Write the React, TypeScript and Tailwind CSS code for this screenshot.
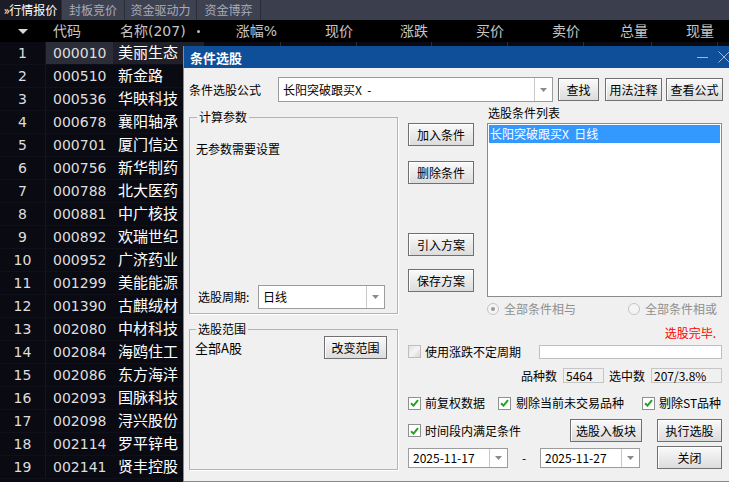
import React from "react";

const rows: [string, string][] = [
  ["000010", "美丽生态"],
  ["000510", "新金路"],
  ["000536", "华映科技"],
  ["000678", "襄阳轴承"],
  ["000701", "厦门信达"],
  ["000756", "新华制药"],
  ["000788", "北大医药"],
  ["000881", "中广核技"],
  ["000892", "欢瑞世纪"],
  ["000952", "广济药业"],
  ["001299", "美能能源"],
  ["001390", "古麒绒材"],
  ["002080", "中材科技"],
  ["002084", "海鸥住工"],
  ["002086", "东方海洋"],
  ["002093", "国脉科技"],
  ["002098", "浔兴股份"],
  ["002114", "罗平锌电"],
  ["002141", "贤丰控股"],
];

const numCols = [
  { label: "涨幅%", w: "w-[77px]" },
  { label: "现价", w: "w-[76px]" },
  { label: "涨跌", w: "w-[75px]" },
  { label: "买价", w: "w-[76px]" },
  { label: "卖价", w: "w-[76px]" },
  { label: "总量", w: "w-[68px]" },
  { label: "现量", w: "w-[66px]" },
];

const tabs = [
  { label: "»行情报价", w: "w-[62px]", active: true },
  { label: "封板竞价", w: "w-[63px]" },
  { label: "资金驱动力", w: "w-[72px]" },
  { label: "资金博弈", w: "w-[64px]" },
];

const Btn = ({ children, className = "" }: { children: React.ReactNode; className?: string }) => (
  <div
    className={`flex items-center justify-center border border-[#707070] bg-linear-to-b from-[#fafafa] to-[#dcdcdc] text-[12px] leading-none text-black shadow-[inset_1px_1px_0_#ffffff] ${className}`}
  >
    {children}
  </div>
);

const Combo = ({ value, className = "" }: { value: string; className?: string }) => (
  <div className={`flex border border-[#9c9c9c] bg-white ${className}`}>
    <div className="flex flex-1 items-center whitespace-pre pl-[4px] text-[12px] leading-none text-black">{value}</div>
    <div className="flex w-[18px] items-center justify-center border-l border-[#c8c8c8]">
      <svg width="7" height="4" viewBox="0 0 7 4">
        <path d="M0 0h7L3.5 4z" fill="#8a8a8a" />
      </svg>
    </div>
  </div>
);

const Check = ({ checked = true, disabled = false }: { checked?: boolean; disabled?: boolean }) => (
  <span
    className={`flex h-[13px] w-[13px] shrink-0 items-center justify-center border ${
      disabled ? "border-[#bdbdbd] bg-linear-to-br from-[#e2e2e2] via-[#f4f4f4] to-[#d6d6d6]" : "border-[#8f8f8f] bg-white"
    }`}
  >
    {checked && (
      <svg width="9" height="8" viewBox="0 0 9 8">
        <path d="M1 4.2 L3.5 6.6 L8 1.2" stroke="#1ea51e" strokeWidth="2" fill="none" />
      </svg>
    )}
  </span>
);

const Radio = ({ on }: { on?: boolean }) => (
  <span className="flex h-[12px] w-[12px] items-center justify-center rounded-full border border-[#c4c4c4] bg-[#f4f4f4]">
    {on && <span className="h-[4px] w-[4px] rounded-full bg-[#9a9a9a]" />}
  </span>
);

const Dialog = () => (
  <div className="absolute left-[183px] top-[46px] flex h-[436px] w-[548px] flex-col border-b border-l border-[#8a8a8a] bg-[#f0f0f0] font-[Noto_Sans_CJK_SC,sans-serif] text-[12px] text-black">
    {/* title bar */}
    <div className="flex h-[22px] shrink-0 items-center bg-[#0f4e98] pl-[6px] pr-[1px]">
      <span className="text-[13px] font-bold leading-none text-white">条件选股</span>
      <div className="ml-auto flex items-center gap-[10px]">
        <svg width="11" height="11" viewBox="0 0 11 11">
          <path d="M0 5.5h11" stroke="#a9b6c8" strokeWidth="1" />
        </svg>
        <svg width="12" height="12" viewBox="0 0 12 12">
          <path d="M0.5 0.5 L11.5 11.5 M11.5 0.5 L0.5 11.5" stroke="#a9b6c8" strokeWidth="1" />
        </svg>
      </div>
    </div>

    <div className="flex flex-col pl-[5px] pt-[9px]">
      {/* formula row */}
      <div className="flex h-[25px] items-center">
        <span className="w-[89px] leading-none">条件选股公式</span>
        <Combo value="长阳突破跟买X  -" className="h-[25px] w-[275px]" />
        <Btn className="ml-[5px] h-[23px] w-[41px]">查找</Btn>
        <Btn className="ml-[6px] h-[23px] w-[57px]">用法注释</Btn>
        <Btn className="ml-[4px] h-[23px] w-[57px]">查看公式</Btn>
      </div>

      <div className="flex">
        {/* left column */}
        <div className="flex w-[209px] flex-col">
          <fieldset className="mt-[9px] h-[203px] border border-[#b4b4b4] px-[6px] shadow-[1px_1px_0_#ffffff]">
            <legend className="ml-[1px] px-[2px] leading-[12px]">计算参数</legend>
            <div className="flex h-[190px] flex-col">
              <div className="mt-[18px] leading-[16px]">无参数需要设置</div>
              <div className="mb-[4px] mt-auto flex items-center">
                <span className="ml-[2px] w-[60px] leading-none">选股周期:</span>
                <Combo value="日线" className="h-[24px] w-[127px]" />
              </div>
            </div>
          </fieldset>
          <fieldset className="mt-[9px] h-[147px] border border-[#b4b4b4] pl-[5px] pr-[10px] shadow-[1px_1px_0_#ffffff]">
            <legend className="ml-[1px] px-[2px] leading-[12px]">选股范围</legend>
            <div className="mt-[1px] flex items-center justify-between">
              <span className="text-[13px] leading-none">全部A股</span>
              <Btn className="h-[23px] w-[63px]">改变范围</Btn>
            </div>
          </fieldset>
        </div>

        {/* right column */}
        <div className="ml-[10px] flex w-[314px] flex-col">
          <div className="flex h-[195px]">
            <div className="flex w-[66px] flex-col">
              <Btn className="mt-[21px] h-[23px]">加入条件</Btn>
              <Btn className="mt-[15px] h-[23px]">删除条件</Btn>
              <Btn className="mt-[49px] h-[23px]">引入方案</Btn>
              <Btn className="mt-[13px] h-[23px]">保存方案</Btn>
            </div>
            <div className="ml-[13px] flex w-[235px] flex-col">
              <div className="mt-[3px] h-[16px] pl-[1px] leading-[16px]">选股条件列表</div>
              <div className="mt-[2px] h-[174px] border border-[#8c8c8c] bg-white p-[1px]">
                <div className="flex h-[18px] items-center whitespace-pre bg-[#3399ff] pl-[1px] text-[12px] leading-none text-white">
                  长阳突破跟买X  日线
                </div>
              </div>
            </div>
          </div>

          {/* radios */}
          <div className="mt-[5px] flex h-[14px] items-center pl-[79px] text-[#8f8f8f]">
            <Radio on />
            <span className="ml-[5px] leading-none">全部条件相与</span>
            <span className="ml-[52px]">
              <Radio />
            </span>
            <span className="ml-[5px] leading-none">全部条件相或</span>
          </div>

          <div className="mt-[10px] flex h-[14px] items-center justify-end pr-[6px] leading-none text-[#ff0000]">
            选股完毕.
          </div>

          <div className="mt-[4px] flex h-[15px] items-center">
            <Check checked={false} disabled />
            <span className="ml-[4px] leading-none">使用涨跌不定周期</span>
            <div className="ml-auto h-[14px] w-[183px] border border-[#c0c0c0] bg-white" />
          </div>

          <div className="mt-[9px] flex h-[15px] items-center justify-end">
            <span className="leading-none">品种数</span>
            <div className="ml-[6px] flex h-[15px] w-[41px] items-center border border-[#c6c6c6] bg-[#f0f0f0] pl-[2px] leading-none">
              5464
            </div>
            <span className="ml-[5px] leading-none">选中数</span>
            <div className="ml-[6px] flex h-[15px] w-[71px] items-center border border-[#c6c6c6] bg-[#f0f0f0] pl-[2px] leading-none">
              207/3.8%
            </div>
          </div>

          <div className="mt-[13px] flex h-[14px] items-center">
            <div className="flex w-[90px] items-center">
              <Check />
              <span className="ml-[4px] leading-none">前复权数据</span>
            </div>
            <div className="flex w-[144px] items-center">
              <Check />
              <span className="ml-[5px] leading-none">剔除当前未交易品种</span>
            </div>
            <div className="flex items-center">
              <Check />
              <span className="ml-[4px] leading-none">剔除ST品种</span>
            </div>
          </div>

          <div className="mt-[9px] flex h-[23px] items-center">
            <Check />
            <span className="ml-[4px] leading-none">时间段内满足条件</span>
            <Btn className="ml-auto h-[23px] w-[72px]">选股入板块</Btn>
            <Btn className="ml-[15px] h-[23px] w-[65px]">执行选股</Btn>
          </div>

          <div className="mt-[4px] flex h-[23px] items-center">
            <Combo value="2025-11-17" className="h-[20px] w-[100px]" />
            <span className="w-[32px] text-center leading-none">-</span>
            <Combo value="2025-11-27" className="h-[20px] w-[100px]" />
            <Btn className="ml-auto h-[23px] w-[65px]">关闭</Btn>
          </div>
        </div>
      </div>
    </div>
  </div>
);

export default function App() {
  return (
    <div className="relative h-[482px] w-[729px] overflow-hidden bg-[#0a0a13] font-[DejaVu_Sans,Noto_Sans_CJK_SC,sans-serif]">
      {/* tab bar */}
      <div className="flex h-[20px] bg-[#3b3e4c]">
        {tabs.map((t) => (
          <div
            key={t.label}
            className={`flex ${t.w} items-center justify-center border-r border-[#2a2c36] font-[Noto_Sans_CJK_SC,sans-serif] text-[12px] leading-none ${
              t.active ? "bg-[#1b1c25] text-white" : "bg-[#3e4150] text-[#a9abb8]"
            }`}
          >
            {t.label}
          </div>
        ))}
      </div>

      {/* header */}
      <div className="flex h-[22px] items-center bg-black text-[14px] leading-none text-[#c6c6c6]">
        <div className="flex w-[46px] justify-center">
          <svg width="10" height="5" viewBox="0 0 10 5">
            <path d="M0 0h10L5 5z" fill="#d8d8d8" />
          </svg>
        </div>
        <div className="w-[67px] pl-[7px]">代码</div>
        <div className="flex w-[91px] items-center pl-[7px]">
          <span>名称(207)</span>
          <span className="ml-auto mr-[4px] h-[3px] w-[3px] rounded-full bg-[#bdbdbd]" />
        </div>
        {numCols.map((c) => (
          <div key={c.label} className={`${c.w} pr-[4px] text-right`}>
            {c.label}
          </div>
        ))}
      </div>

      {/* rows */}
      <div className="flex flex-col">
        {rows.map(([code, name], i) => (
          <div key={code} className="flex h-[23px] items-center border-b border-[#10101a] text-[14px] leading-none text-[#dedede]">
            <div className="flex h-full w-[46px] items-center justify-center border-r border-[#15151f]">{i + 1}</div>
            <div className={`flex h-full w-[67px] items-center pl-[7px] ${i === 0 ? "bg-[#2b2d38]" : ""}`}>{code}</div>
            <div className={`flex h-full w-[91px] items-center pl-[5px] text-[15px] text-white ${i === 0 ? "bg-[#1f2029]" : ""}`}>
              {name}
            </div>
            {numCols.map((c) => (
              <div key={c.label} className={`h-full ${c.w} border-r border-[#2c2c35]`} />
            ))}
          </div>
        ))}
      </div>

      <Dialog />
    </div>
  );
}
